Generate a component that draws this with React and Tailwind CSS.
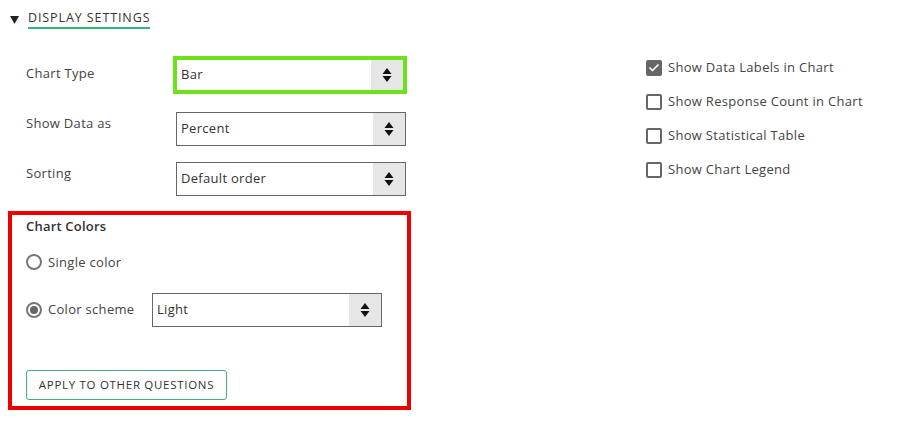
import { Check } from "lucide-react";

const Arrows = () => (
  <div className="flex h-full w-[32px] items-center justify-center bg-[#e6e6e6]">
    <svg width="10" height="16" viewBox="0 0 10 16">
      <path d="M5 1 L9.5 7 L0.5 7 Z" fill="#111" />
      <path d="M5 15 L9.5 9 L0.5 9 Z" fill="#111" />
    </svg>
  </div>
);

const Select = ({ value, className }) => (
  <div className={`flex items-center bg-white ${className}`}>
    <span className="flex-1 pl-[4px] text-[13px] tracking-[0.3px] text-[#333]">{value}</span>
    <Arrows />
  </div>
);

const Row = ({ label, children, className, pad = "pt-[2px]" }) => (
  <div className={`flex items-start ${className}`}>
    <span className={`w-[150px] text-[13px] tracking-[0.3px] text-[#444] ${pad}`}>{label}</span>
    {children}
  </div>
);

const CheckItem = ({ label, checked }) => (
  <div className="flex h-[34px] items-center gap-[6px]">
    {checked ? (
      <span className="flex h-[16px] w-[16px] items-center justify-center rounded-[2px] bg-[#666]">
        <Check className="h-[12px] w-[12px] text-white" strokeWidth={3.5} />
      </span>
    ) : (
      <span className="h-[16px] w-[16px] rounded-[2px] border-2 border-[#666] bg-white" />
    )}
    <span className="text-[13px] tracking-[0.3px] text-[#444]">{label}</span>
  </div>
);

const Radio = ({ checked }) => (
  <span className="flex h-[16px] w-[16px] items-center justify-center rounded-full border-2 border-[#777] bg-white">
    {checked && <span className="h-[8px] w-[8px] rounded-full bg-[#666]" />}
  </span>
);

export default function App() {
  return (
    <div
      className="relative h-[424px] w-[901px] bg-white"
      style={{ fontFamily: '"Open Sans", sans-serif' }}
    >
      <div className="flex">
        {/* Left column */}
        <div className="w-[412px] pl-[8px]">
          <div className="flex items-center pt-[10px] pl-[2px]">
            <svg width="9" height="8" viewBox="0 0 9 8">
              <path d="M0 0 L9 0 L4.5 8 Z" fill="#222" />
            </svg>
            <span className="ml-[9px] border-b-2 border-[#2fb67a] pb-[1px] text-[12.5px] leading-[16px] tracking-[0.9px] text-[#333]">
              DISPLAY SETTINGS
            </span>
          </div>

          <div className="pl-[18px]">
            <Row label="Chart Type" className="mt-[27px]" pad="pt-[8px]">
              <Select
                value="Bar"
                className="ml-[-3px] h-[38px] w-[234px] border-[4px] border-[#6be21a]"
              />
            </Row>
            <Row label="Show Data as" className="mt-[18px]">
              <Select value="Percent" className="h-[34px] w-[230px] border border-[#666]" />
            </Row>
            <Row label="Sorting" className="mt-[16px]">
              <Select value="Default order" className="h-[34px] w-[230px] border border-[#666]" />
            </Row>
          </div>

          <div className="mt-[15px] h-[199px] w-[403px] border-[4px] border-[#ee0000] pl-[14px] pt-[2px]">
            <div className="text-[13px] font-semibold tracking-[0.2px] text-[#333]">Chart Colors</div>
            <div className="mt-[16px] flex items-center gap-[6px]">
              <Radio />
              <span className="text-[13px] tracking-[0.3px] text-[#444]">Single color</span>
            </div>
            <div className="mt-[21px] flex items-center">
              <Radio checked />
              <span className="ml-[6px] w-[104px] text-[13px] tracking-[0.3px] text-[#444]">Color scheme</span>
              <Select value="Light" className="h-[34px] w-[230px] border border-[#666]" />
            </div>
            <button className="mt-[43px] h-[30px] w-[201px] rounded-[3px] border border-[#3db37a] bg-white text-[11.5px] tracking-[0.7px] text-[#333]">
              APPLY TO OTHER QUESTIONS
            </button>
          </div>
        </div>

        {/* Right column */}
        <div className="ml-[234px] pt-[51px]">
          <CheckItem label="Show Data Labels in Chart" checked />
          <CheckItem label="Show Response Count in Chart" />
          <CheckItem label="Show Statistical Table" />
          <CheckItem label="Show Chart Legend" />
        </div>
      </div>
    </div>
  );
}
